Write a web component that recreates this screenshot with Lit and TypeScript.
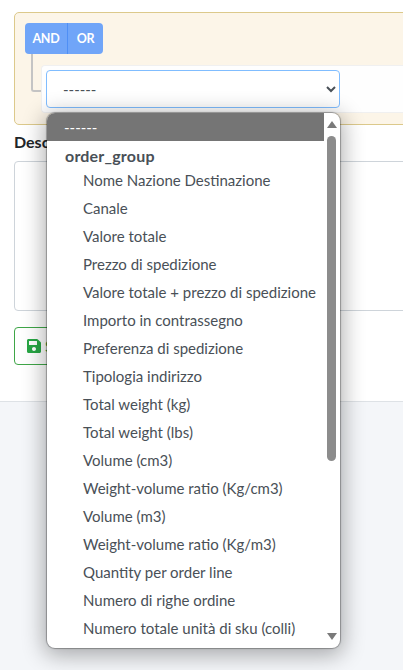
import { LitElement, html, css, svg } from 'lit';
import { customElement } from 'lit/decorators.js';

const OPTIONS = [
  'Nome Nazione Destinazione',
  'Canale',
  'Valore totale',
  'Prezzo di spedizione',
  'Valore totale + prezzo di spedizione',
  'Importo in contrassegno',
  'Preferenza di spedizione',
  'Tipologia indirizzo',
  'Total weight (kg)',
  'Total weight (lbs)',
  'Volume (cm3)',
  'Weight-volume ratio (Kg/cm3)',
  'Volume (m3)',
  'Weight-volume ratio (Kg/m3)',
  'Quantity per order line',
  'Numero di righe ordine',
  'Numero totale unità di sku (colli)',
];

const saveIcon = svg`<path fill="currentColor" d="M433.941 129.941l-83.882-83.882A48 48 0 0 0 316.118 32H48C21.49 32 0 53.49 0 80v352c0 26.51 21.49 48 48 48h352c26.51 0 48-21.49 48-48V163.882a48 48 0 0 0-14.059-33.941zM224 416c-35.346 0-64-28.654-64-64 0-35.346 28.654-64 64-64s64 28.654 64 64c0 35.346-28.654 64-64 64zm96-304.52V212c0 6.627-5.373 12-12 12H76c-6.627 0-12-5.373-12-12V108c0-6.627 5.373-12 12-12h228.52c3.183 0 6.235 1.264 8.485 3.515l3.48 3.48A11.996 11.996 0 0 1 320 111.48z"/>`;

@customElement('app-root')
export class AppRoot extends LitElement {
  static styles = css`
    :host {
      display: block;
      position: relative;
      width: 403px;
      height: 670px;
      overflow: hidden;
      background: #f4f6f9;
      font-family: 'Lato', 'Liberation Sans', sans-serif;
      font-size: 15px;
      color: #212529;
    }
    .content {
      width: 500px;
      height: 402px;
      box-sizing: border-box;
      padding: 12px 0 0 14px;
      background: #fff;
      border-bottom: 1px solid #dee2e6;
    }
    .group {
      box-sizing: border-box;
      height: 113px;
      padding: 10px 0 0 10px;
      border: 1px solid #dcc98b;
      border-radius: 5px;
      background: #fcf5e8;
    }
    .toggle {
      display: inline-flex;
      height: 31px;
      border-radius: 4px;
      overflow: hidden;
      color: #fff;
      font-size: 12.5px;
      font-weight: 700;
      letter-spacing: -0.2px;
    }
    .toggle span {
      display: flex;
      align-items: center;
      justify-content: center;
      width: 42px;
      background: #70a5f8;
    }
    .toggle span + span {
      width: 35px;
      border-left: 1px solid #4f8ff5;
    }
    .rule-line {
      display: flex;
      margin-left: 6px;
    }
    .connector {
      width: 8px;
      height: 36px;
      border: solid #c4c4c4;
      border-width: 0 0 2px 2px;
      border-bottom-left-radius: 3px;
    }
    .rule {
      flex: 1;
      box-sizing: border-box;
      height: 48px;
      margin-top: 11px;
      padding: 5px;
      background: #fefefe;
      border: 1px solid #f0f0f0;
      border-right: 0;
      border-radius: 4px 0 0 4px;
    }
    select {
      display: block;
      width: 294px;
      height: 38px;
      box-sizing: border-box;
      margin: -1px 0 0 -1px;
      padding: 0 12px;
      background: #fff;
      border: 1px solid #80bdff;
      border-radius: 4px;
      color: #495057;
      font: inherit;
      outline: none;
    }
    .label {
      margin: 6px 0 0;
      height: 21px;
      line-height: 21px;
      font-size: 16px;
      font-weight: 700;
    }
    .textarea {
      box-sizing: border-box;
      height: 150px;
      margin-top: 9px;
      border: 1px solid #ced4da;
      border-radius: 4px;
      background: #fff;
    }
    .save {
      display: inline-flex;
      align-items: center;
      gap: 4px;
      box-sizing: border-box;
      height: 38px;
      margin-top: 16px;
      padding: 0 12px;
      border: 1px solid #3fa648;
      border-radius: 4px;
      background: #fff;
      color: #28a745;
      font: inherit;
    }
    .save svg {
      width: 14px;
      height: 16px;
    }
    .dropdown {
      position: absolute;
      left: 47px;
      top: 113px;
      width: 293px;
      height: 535px;
      display: flex;
      overflow: hidden;
      background: #fff;
      border-radius: 8px;
      box-shadow: 0 0 1px 1px rgba(0, 0, 0, 0.3), 0 4px 22px 3px rgba(0, 0, 0, 0.32);
    }
    .list {
      flex: 1;
      min-width: 0;
      color: #495057;
    }
    .selected {
      height: 28px;
      line-height: 28px;
      padding-left: 17px;
      background: #757575;
      color: #fff;
    }
    .optgroup {
      height: 25px;
      padding: 2px 0 0 18px;
      box-sizing: border-box;
      line-height: 25px;
      font-size: 16px;
      font-weight: 700;
      letter-spacing: 0.2px;
    }
    .option {
      height: 28px;
      line-height: 28px;
      padding-left: 36px;
      white-space: nowrap;
    }
    .scrollbar {
      flex: none;
      box-sizing: border-box;
      width: 16px;
      padding: 0 2px 0 1px;
      display: flex;
      flex-direction: column;
      align-items: center;
    }
    .arrow {
      flex: none;
      width: 0;
      height: 0;
      border-left: 5px solid transparent;
      border-right: 5px solid transparent;
    }
    .arrow.up {
      margin-top: 8px;
      border-bottom: 7px solid #7a7a7a;
    }
    .arrow.down {
      margin-top: 172px;
      border-top: 7px solid #7a7a7a;
    }
    .thumb {
      flex: none;
      width: 9px;
      height: 325px;
      margin-top: 8px;
      border-radius: 5px;
      background: #8c8c8c;
    }
  `;

  render() {
    return html`
      <div class="content">
        <div class="group">
          <div class="toggle"><span>AND</span><span>OR</span></div>
          <div class="rule-line">
            <div class="connector"></div>
            <div class="rule">
              <select><option>------</option></select>
            </div>
          </div>
        </div>
        <div class="label">Descrizione</div>
        <div class="textarea"></div>
        <button class="save">
          <svg viewBox="0 0 448 512">${saveIcon}</svg>
          Salva
        </button>
      </div>
      <div class="dropdown">
        <div class="list">
          <div class="selected">------</div>
          <div class="optgroup">order_group</div>
          ${OPTIONS.map((o) => html`<div class="option">${o}</div>`)}
        </div>
        <div class="scrollbar">
          <div class="arrow up"></div>
          <div class="thumb"></div>
          <div class="arrow down"></div>
        </div>
      </div>
    `;
  }
}
